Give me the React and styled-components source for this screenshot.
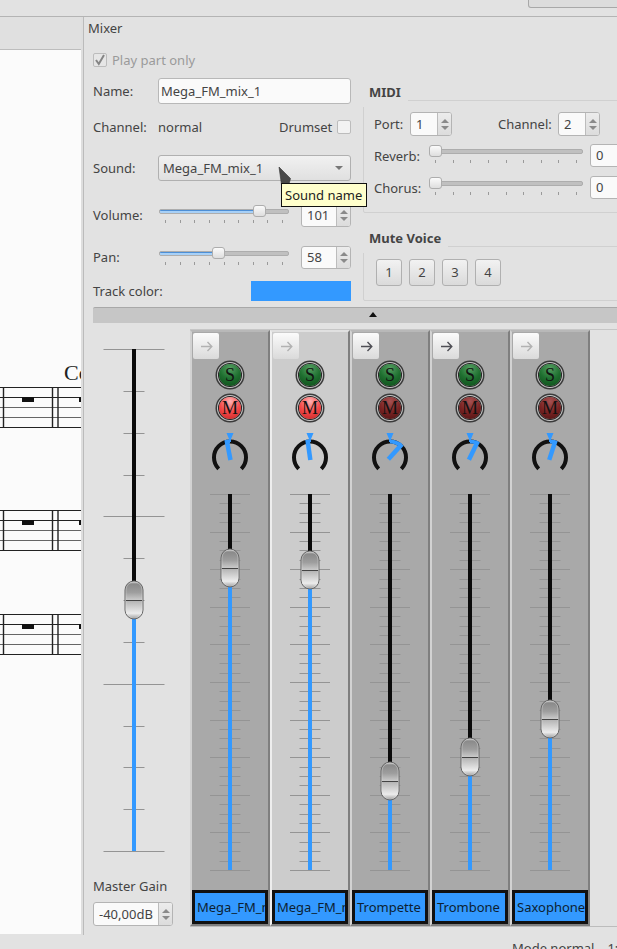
import React from "react";
import styled, { createGlobalStyle } from "styled-components";

const Global = createGlobalStyle`
  html, body { margin: 0; padding: 0; background: #e2e2e2; }
  * { box-sizing: border-box; }
  #root { width: 617px; height: 949px; overflow: hidden; }
`;

const UI = `"Noto Sans", "Open Sans", sans-serif`;
const BLUE = "#3399ff";

const Page = styled.div`
  position: relative; width: 617px; height: 949px; overflow: hidden;
  display: flex; flex-direction: column; background: #e2e2e2;
  font: 13px/18px ${UI}; color: #444;
`;
const TopBar = styled.div`
  height: 17px; flex: none; border-bottom: 1px solid #b4b4b4; padding-left: 528px;
`;
const TopButton = styled.div`
  height: 8px; width: 120px; border: 1px solid #a8a8a8; border-top: none;
  border-radius: 0 0 3px 3px; background: #dcdcdc;
`;
const Body = styled.div`
  flex: none; height: 918px; display: flex;
`;
const ScorePane = styled.div`
  width: 81px; flex: none; display: flex; flex-direction: column; overflow: hidden;
`;
const TabStrip = styled.div`
  height: 33px; flex: none; background: #e0e0e0; border-bottom: 1px solid #bdbdbd;
`;
const Score = styled.div`
  flex: none; height: 884px; background: #fbfbfb; display: flex; flex-direction: column;
`;
const ScoreMark = styled.div`
  margin: 310px 0 0 64px; height: 27px; font: 22px/26px "Liberation Serif", serif; color: #222;
  white-space: nowrap; width: 40px;
`;
const StaffSvg = styled.svg`
  display: block; flex: none; margin-top: ${(p) => p.$gap}px;
`;
const Splitter = styled.div`
  width: 3px; flex: none; background: #dedede; border-right: 1px solid #bbb;
`;
const Mixer = styled.div`
  flex: none; width: 533px; display: flex; flex-direction: column;
`;
const MixerTitle = styled.div`
  height: 22px; padding-left: 4px; line-height: 22px;
`;
const TopPanel = styled.div`
  display: flex; padding-left: 9px; height: 262px; gap: 12px;
`;
const LeftCol = styled.div`
  width: 258px; flex: none; display: flex; flex-direction: column; padding-top: 14px;
`;
const Row = styled.div`
  display: flex; align-items: center; height: ${(p) => p.$h}px; margin-top: ${(p) => p.$top || 0}px; flex: none;
`;
const Label = styled.div`
  width: ${(p) => p.$w || 65}px; flex: none; white-space: nowrap; margin-left: ${(p) => p.$ml || 0}px;
  margin-bottom: ${(p) => p.$up || 0}px;
`;
const CheckBox = styled.div`
  width: 14px; height: 14px; flex: none; border: 1px solid #bcbcbc; border-radius: 2px; background: ${(p) => (p.$dim ? "#e6e6e6" : "#f2f2f2")};
  display: flex; align-items: center; justify-content: center;
`;
const DimLabel = styled.div`
  color: #9a9a9a; margin-left: 5px;
`;
const TextField = styled.div`
  width: 193px; height: 26px; background: #fafafa; border: 1px solid #b8b8b8; border-radius: 3px;
  padding-left: 2px; line-height: 24px; flex: none;
`;
const Value = styled.div`
  flex: 1; white-space: nowrap;
`;
const Combo = styled.div`
  width: 193px; height: 26px; border: 1px solid #b0b0b0; border-radius: 3px;
  background: linear-gradient(#f1f1f1, #e0e0e0); flex: none;
  display: flex; align-items: center; justify-content: space-between; padding: 0 7px 0 4px;
`;
const ComboArrow = styled.div`
  width: 0; height: 0; border-left: 4px solid transparent; border-right: 4px solid transparent;
  border-top: 4px solid #777;
`;
const ColorBar = styled.div`
  width: 100px; height: 20px; background: ${BLUE}; margin-left: 93px; flex: none;
`;

const SliderWrap = styled.div`
  width: ${(p) => p.$w}px; flex: none; align-self: flex-start; margin-top: 1px; display: flex; flex-direction: column;
`;
const SliderTrack = styled.div`
  position: relative; height: 12px; display: flex; align-items: center;
`;
const Groove = styled.div`
  flex: 1; height: 5px; border-radius: 2px; background: #c0c0c0; border: 1px solid #adadad; overflow: hidden;
`;
const GrooveFill = styled.div`
  height: 100%; background: #a8d0f6; box-shadow: inset 0 1px 0 #4d8fd6;
`;
const SliderHandle = styled.div`
  position: absolute; top: 0; width: 13px; height: 12px; border-radius: 3px;
  border: 1px solid #adadad; background: linear-gradient(#fbfbfb, #dedede);
`;
const TickRow = styled.div`
  display: flex; justify-content: space-between; padding: 0 ${(p) => p.$pad}px; margin-top: 3px;
`;
const Tick = styled.div`
  width: 1px; height: 3px; background: #9a9a9a;
`;

const SpinBox = styled.div`
  width: ${(p) => p.$w}px; height: ${(p) => p.$h || 23}px; flex: none; display: flex;
  border: 1px solid #b4b4b4; border-radius: 3px; background: #fafafa; overflow: hidden;
  margin-left: ${(p) => p.$ml || 0}px;
`;
const SpinText = styled.div`
  flex: 1; padding-left: ${(p) => p.$pad || 5}px; line-height: ${(p) => (p.$h || 23) - 2}px; white-space: nowrap;
`;
const SpinButtons = styled.div`
  width: 14px; flex: none; border-left: 1px solid #bcbcbc; background: linear-gradient(#ececec, #dcdcdc);
  display: flex; flex-direction: column; align-items: center; justify-content: center; gap: 3px;
`;
const SpinUp = styled.div`
  width: 0; height: 0; border-left: 4px solid transparent; border-right: 4px solid transparent; border-bottom: 4px solid #8a8a8a;
`;
const SpinDown = styled.div`
  width: 0; height: 0; border-left: 4px solid transparent; border-right: 4px solid transparent; border-top: 4px solid #8a8a8a;
`;

const RightCol = styled.div`
  flex: 1; display: flex; flex-direction: column; min-width: 0;
`;
const Group = styled.div`
  position: relative; flex: none; width: 300px; height: ${(p) => p.$h}px; margin-top: ${(p) => p.$top}px;
  border: 1px solid #d0d0d0; border-radius: 2px; padding: ${(p) => p.$pad};
`;
const Legend = styled.div`
  position: absolute; left: -1px; top: ${(p) => p.$top}px; width: ${(p) => p.$w}px; height: 20px;
  background: #e2e2e2; padding-left: 6px; font-weight: 700; line-height: 10px; white-space: nowrap;
`;
const VoiceRow = styled.div`
  display: flex; gap: 7px;
`;
const VoiceButton = styled.div`
  width: 26px; height: 27px; border: 1px solid #b0b0b0; border-radius: 3px;
  background: linear-gradient(#f2f2f2, #dadada); text-align: center; line-height: 25px;
`;
const Collapse = styled.div`
  height: 16px; margin: 6px 0 0 9px; flex: none; background: #c6c6c6; border-top: 1px solid #a8a8a8; border-radius: 2px 0 0 0;
  display: flex; justify-content: center; padding: 4px 0 0 36px;
`;
const CollapseArrow = styled.div`
  width: 0; height: 0; border-left: 4px solid transparent; border-right: 4px solid transparent; border-bottom: 5px solid #111;
`;

const BottomPanel = styled.div`
  display: flex; flex: none;
`;
const MasterCol = styled.div`
  width: 106px; flex: none; padding: 22px 0 0 9px; display: flex; flex-direction: column;
`;
const MasterLabel = styled.div`
  margin-top: 22px; height: 18px; white-space: nowrap;
`;
const MasterSpin = styled(SpinBox)`
  margin-top: 7px;
`;
const StripFrame = styled.div`
  margin-top: 6px; flex: 1; height: 598px; border-top: 1px solid #c6c6c6; border-bottom: 1px solid #bcbcbc; display: flex;
`;
const Strip = styled.div`
  width: 80px; flex: none; height: 596px; display: flex; flex-direction: column; align-items: center;
  border-left: 2px solid ${(p) => (p.$selected ? "#eeeeee" : "#d2d2d2")};
  border-right: 2px solid #7f7f7f; border-top: 2px solid ${(p) => (p.$selected ? "#e0e0e0" : "#b8b8b8")};
  border-bottom: 2px solid #7f7f7f;
  background: ${(p) => (p.$selected ? "#cccccc" : "#a9a9a9")};
`;
const ArrowButton = styled.div`
  align-self: flex-start; margin: 1px 0 0 1px; width: 26px; height: 26px; border-radius: 2px;
  background: linear-gradient(#fbfbfb, #dadada); display: flex; align-items: center; justify-content: center; flex: none;
`;
const RoundButton = styled.div`
  width: 22px; height: 22px; flex: none; margin-top: ${(p) => p.$top}px; border-radius: 50%;
  background: ${(p) => p.$bg};
  box-shadow: 0 0 0 1px #222, 0 0 0 2px #c8c8c8, 0 0 0 3.5px #3a3a3a;
  text-align: center; font: 18px/22px "Liberation Serif", serif; color: #111;
`;
const KnobSvg = styled.svg`
  display: block; flex: none; margin-top: 12px;
`;
const FaderSvg = styled.svg`
  display: block; flex: none; margin-top: ${(p) => p.$top || 0}px;
`;
const NameTag = styled.div`
  width: 76px; height: 34px; flex: none; margin-top: 16px; background: ${BLUE}; border: 3px solid #111;
  padding-left: 2px; line-height: 28px; color: #0c1f33; overflow: hidden; white-space: nowrap;
`;
const StatusBar = styled.div`
  flex: none; height: 14px; padding: 4px 0 0 512px; display: flex; white-space: nowrap;
`;
const StatusCell = styled.div`
  margin-right: ${(p) => p.$mr || 0}px;
`;
const Tooltip = styled.div`
  position: absolute; left: 281px; top: 183px; width: 86px; height: 24px; background: #ffffcc;
  border: 1px solid #111; padding-left: 3px; line-height: 22px; color: #222; white-space: nowrap;
`;
const Cursor = styled.svg`
  position: absolute; left: 278px; top: 166px;
`;

const CheckMark = () => (
  <svg width="12" height="12" viewBox="0 0 12 12">
    <path d="M2 6 L4.8 10 L10 1" fill="none" stroke="#858585" strokeWidth="2" />
  </svg>
);

const Slider = ({ w, pct, fill, pad }) => (
  <SliderWrap $w={w}>
    <SliderTrack>
      <Groove>{fill ? <GrooveFill style={{ width: `${pct}%` }} /> : null}</Groove>
      <SliderHandle style={{ left: `${(pct / 100) * (w - 13)}px` }} />
    </SliderTrack>
    <TickRow $pad={pad}>
      {Array.from({ length: 9 }, (_, i) => <Tick key={i} />)}
    </TickRow>
  </SliderWrap>
);

const Spin = ({ w, h, value, ml, pad, as: As = SpinBox }) => (
  <As $w={w} $h={h} $ml={ml}>
    <SpinText $h={h} $pad={pad}>{value}</SpinText>
    <SpinButtons><SpinUp /><SpinDown /></SpinButtons>
  </As>
);

const Staff = ({ gap }) => (
  <StaffSvg $gap={gap} width="81" height="41" viewBox="0 0 81 41">
    {[0.5, 10.5, 20.5, 30.5, 40.5].map((y, i) => (
      <line key={i} x1="0" x2="81" y1={y} y2={y} stroke={i === 2 || i === 3 ? "#666" : "#222"} strokeWidth="1" />
    ))}
    {[3.5, 52.5, 58].map((x) => (
      <line key={x} x1={x} x2={x} y1="0" y2="41" stroke="#222" strokeWidth="1.4" />
    ))}
    <rect x="22" y="10" width="12" height="5" fill="#111" />
    <rect x="79" y="10" width="2" height="5" fill="#111" />
  </StaffSvg>
);

const ArrowIcon = ({ on }) => (
  <svg width="13" height="11" viewBox="0 0 13 11">
    <path d="M1 5.5 H11.5 M7.5 1 L11.8 5.5 L7.5 10" fill="none" stroke={on ? "#4f4f55" : "#b2b2b2"} strokeWidth="1.4" />
  </svg>
);

const polar = (cx, cy, r, deg) => {
  const a = (deg * Math.PI) / 180;
  return [cx + r * Math.sin(a), cy - r * Math.cos(a)];
};

const Knob = ({ angle }) => {
  const cx = 22, cy = 26.5, r = 16;
  const [lx, ly] = polar(cx, cy, r, -135);
  const [rx, ry] = polar(cx, cy, r, 135);
  const [tx, ty] = polar(cx, cy, 18, angle);
  const [bx, by] = polar(cx, cy, -2.5, angle);
  const [ax, ay] = polar(cx, cy, r, angle);
  return (
    <KnobSvg width="44" height="42" viewBox="0 0 44 42">
      <path d={`M${lx} ${ly} A${r} ${r} 0 1 1 ${rx} ${ry}`} fill="none" stroke="#111" strokeWidth="4" />
      <path d={`M${cx} ${cy - r} A${r} ${r} 0 0 ${angle >= 0 ? 1 : 0} ${ax} ${ay}`} fill="none" stroke={BLUE} strokeWidth="4" />
      <path d={`M${cx - 3.5} 2 H${cx + 3.5} L${cx + 1} 8 V11 H${cx - 1} V8 Z`} fill={BLUE} />
      <line x1={bx} y1={by} x2={tx} y2={ty} stroke={BLUE} strokeWidth="4.5" />
    </KnobSvg>
  );
};

const Handle = ({ cx, y }) => (
  <g>
    <rect x={cx - 9} y={y - 19} width="18" height="38" rx="9" fill="url(#capsule)" stroke="#666" strokeWidth="1" />
    <rect x={cx - 8} y={y - 18} width="16" height="36" rx="8" fill="none" stroke="#e8e8e8" strokeOpacity="0.35" strokeWidth="1" />
    <line x1={cx - 8} x2={cx + 8} y1={y + 0.5} y2={y + 0.5} stroke="#444" strokeWidth="1" />
  </g>
);

const CapsuleDefs = () => (
  <defs>
    <linearGradient id="capsule" x1="0" y1="0" x2="0" y2="1">
      <stop offset="0" stopColor="#d8d8d8" />
      <stop offset="0.08" stopColor="#8a8a8a" />
      <stop offset="0.3" stopColor="#9e9e9e" />
      <stop offset="0.49" stopColor="#c8c8c8" />
      <stop offset="0.5" stopColor="#b0b0b0" />
      <stop offset="0.85" stopColor="#ececec" />
      <stop offset="0.94" stopColor="#bcbcbc" />
      <stop offset="1" stopColor="#777777" />
    </linearGradient>
  </defs>
);

const Fader = ({ w, h, cx, y0, y1, handle, count, major, minor, top }) => {
  const ticks = [];
  for (let i = 0; i <= count; i++) {
    const y = Math.round(y0 + ((y1 - y0) * i) / count) + 0.5;
    const half = (i % 4 === 0 ? major : minor) / 2;
    ticks.push(<line key={i} x1={cx - half} x2={cx + half} y1={y} y2={y} stroke="#949494" strokeWidth="1" />);
  }
  return (
    <FaderSvg $top={top} width={w} height={h} viewBox={`0 0 ${w} ${h}`}>
      <CapsuleDefs />
      {ticks}
      <rect x={cx - 2} y={y0} width="4" height={handle - y0} fill="#0a0a0a" />
      <rect x={cx - 2} y={handle} width="4" height={y1 - handle} fill={BLUE} />
      <Handle cx={cx} y={handle} />
    </FaderSvg>
  );
};

const SOLO = "radial-gradient(circle at 50% 20%, #559e62 0%, #1f7030 50%, #0c4a18 100%)";
const MUTE_ON = "radial-gradient(circle at 50% 20%, #ffb4b4 0%, #f64a4a 50%, #c42424 100%)";
const MUTE_OFF = "radial-gradient(circle at 50% 20%, #a65252 0%, #7b2424 50%, #4c1212 100%)";

const strips = [
  { name: "Mega_FM_mix_1", on: false, mute: true, angle: -11, handle: 78 },
  { name: "Mega_FM_mix_1", on: false, mute: true, angle: -8, handle: 80, selected: true },
  { name: "Trompette", on: true, mute: false, angle: 42, handle: 291 },
  { name: "Trombone", on: true, mute: false, angle: 26, handle: 267 },
  { name: "Saxophone", on: false, mute: false, angle: 18, handle: 229 },
];

export default function App() {
  return (
    <Page>
      <Global />
      <TopBar><TopButton /></TopBar>
      <Body>
        <ScorePane>
          <TabStrip />
          <Score>
            <ScoreMark>Co</ScoreMark>
            <Staff gap={0} />
            <Staff gap={82} />
            <Staff gap={63} />
          </Score>
        </ScorePane>
        <Splitter />
        <Mixer>
          <MixerTitle>Mixer</MixerTitle>
          <TopPanel>
            <LeftCol>
              <Row $h={14}>
                <CheckBox $dim><CheckMark /></CheckBox>
                <DimLabel>Play part only</DimLabel>
              </Row>
              <Row $h={26} $top={11}>
                <Label>Name:</Label>
                <TextField>Mega_FM_mix_1</TextField>
              </Row>
              <Row $h={14} $top={16}>
                <Label>Channel:</Label>
                <Value>normal</Value>
                <Label $w={58}>Drumset</Label>
                <CheckBox />
              </Row>
              <Row $h={26} $top={21}>
                <Label>Sound:</Label>
                <Combo>Mega_FM_mix_1<ComboArrow /></Combo>
              </Row>
              <Row $h={23} $top={23}>
                <Label $w={66} $up={2}>Volume:</Label>
                <Slider w={130} pct={80} fill pad={6} />
                <Spin w={50} value="101" ml={12} />
              </Row>
              <Row $h={23} $top={19}>
                <Label $w={66} $up={2}>Pan:</Label>
                <Slider w={130} pct={45} fill pad={6} />
                <Spin w={50} value="58" ml={12} />
              </Row>
              <Row $h={20} $top={12}>
                <Label>Track color:</Label>
                <ColorBar />
              </Row>
            </LeftCol>
            <RightCol>
              <Group $h={113} $top={61} $pad="11px 0 0 10px">
                <Legend $top={-14} $w={45}>MIDI</Legend>
                <Row $h={24}>
                  <Label $w={36}>Port:</Label>
                  <Spin w={42} h={24} value="1" />
                  <Label $w={60} $ml={46}>Channel:</Label>
                  <Spin w={42} h={24} value="2" />
                </Row>
                <Row $h={23} $top={8}>
                  <Label $w={55}>Reverb:</Label>
                  <Slider w={154} pct={0} pad={6} />
                  <Spin w={50} value="0" ml={7} />
                </Row>
                <Row $h={23} $top={9}>
                  <Label $w={55}>Chorus:</Label>
                  <Slider w={154} pct={0} pad={6} />
                  <Spin w={50} value="0" ml={7} />
                </Row>
              </Group>
              <Group $h={55} $top={33} $pad="12px 0 0 12px">
                <Legend $top={-14} $w={85}>Mute Voice</Legend>
                <VoiceRow>
                  {[1, 2, 3, 4].map((n) => <VoiceButton key={n}>{n}</VoiceButton>)}
                </VoiceRow>
              </Group>
            </RightCol>
          </TopPanel>
          <Collapse><CollapseArrow /></Collapse>
          <BottomPanel>
            <MasterCol>
              <Fader w={82} h={510} cx={41} y0={4} y1={506} handle={255} count={12} major={61} minor={21} />
              <MasterLabel>Master Gain</MasterLabel>
              <Spin as={MasterSpin} w={80} h={24} value="-40,00dB" />
            </MasterCol>
            <StripFrame>
              {strips.map((s, i) => (
                <Strip key={i} $selected={s.selected}>
                  <ArrowButton><ArrowIcon on={s.on} /></ArrowButton>
                  <RoundButton $top={5} $bg={SOLO}>S</RoundButton>
                  <RoundButton $top={11} $bg={s.mute ? MUTE_ON : MUTE_OFF}>M</RoundButton>
                  <Knob angle={s.angle} />
                  <Fader w={76} h={384} cx={38} y0={4} y1={380} handle={s.handle} count={40} major={40} minor={21} top={17} />
                  <NameTag>{s.name}</NameTag>
                </Strip>
              ))}
            </StripFrame>
          </BottomPanel>
        </Mixer>
      </Body>
      <StatusBar>
        <StatusCell $mr={13}>Mode normal</StatusCell>
        <StatusCell>1:1</StatusCell>
      </StatusBar>
      <Cursor width="16" height="22" viewBox="0 0 16 22">
        <path d="M1 1 L12.5 12.5 L10.5 20 L3.5 19 Z" fill="#484848" stroke="#333" strokeWidth="0.6" />
      </Cursor>
      <Tooltip>Sound name</Tooltip>
    </Page>
  );
}
